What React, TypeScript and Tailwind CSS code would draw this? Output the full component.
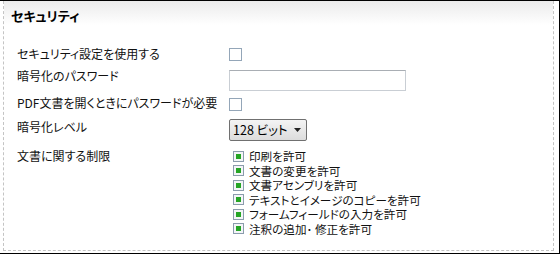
import React from "react";

const font = "font-['Noto_Sans_CJK_JP','Noto_Sans',sans-serif] [font-feature-settings:'palt']";

const permissions = [
  "印刷を許可",
  "文書の変更を許可",
  "文書アセンブリを許可",
  "テキストとイメージのコピーを許可",
  "フォームフィールドの入力を許可",
  "注釈の追加･ 修正を許可",
];

function EmptyBox() {
  return <div className="w-[13px] h-[13px] border border-[#94a6b8] bg-white" />;
}

function CheckedBox() {
  return (
    <div className="w-[11px] h-[11px] border border-[#8b9cad] bg-[#f3f5f7] flex items-center justify-center shrink-0">
      <div className="w-[5px] h-[5px] bg-[#25a525]" />
    </div>
  );
}

export default function App() {
  return (
    <div className={`w-[560px] h-[254px] bg-white border-t border-r border-b border-black text-[12px] text-[#111] ${font}`}>
      <div className="ml-[3px] w-[551px] h-[250px] border-l border-r border-b border-dashed border-[#c4c4c4]">
        {/* header */}
        <div className="h-[24px] bg-gradient-to-b from-[#ebebeb] to-white flex items-center pl-[7px] pt-[5px]">
          <span className="text-[13px] font-bold text-black">セキュリティ</span>
        </div>

        <div className="pl-[13px] pt-[21px] flex flex-col">
          <div className="h-[22px] flex">
            <div className="w-[212px] leading-[16px]">セキュリティ設定を使用する</div>
            <div className="pt-[2px]"><EmptyBox /></div>
          </div>
          <div className="h-[27px] flex">
            <div className="w-[212px] leading-[16px]">暗号化のパスワード</div>
            <div className="pt-[2px]">
              <div className="w-[177px] h-[21px] border border-[#c9ced4] border-t-[#a9aeb4] bg-white" />
            </div>
          </div>
          <div className="h-[24px] flex">
            <div className="w-[212px] leading-[16px]">PDF文書を開くときにパスワードが必要</div>
            <div className="pt-[3px]"><EmptyBox /></div>
          </div>
          <div className="h-[29px] flex">
            <div className="w-[212px] leading-[16px]">暗号化レベル</div>
            <div className="w-[78px] h-[22px] rounded-[2px] border border-[#707070] bg-gradient-to-b from-[#f4f4f4] to-[#dcdcdc] flex items-center pl-[3px] pr-[5px]">
              <span className="flex-1 text-[12.5px] leading-[16px] text-black">128 ビット</span>
              <svg width="7" height="4" viewBox="0 0 7 4"><path d="M0 0h7L3.5 4z" fill="#222" /></svg>
            </div>
          </div>
          <div className="flex">
            <div className="w-[212px] leading-[16px]">文書に関する制限</div>
            <div className="flex flex-col pl-[4px] pt-[1px]">
              {permissions.map((p) => (
                <div key={p} className="h-[14.5px] flex items-center gap-[5px]">
                  <CheckedBox />
                  <span className="block h-[14px] leading-[14px] text-[11.6px] whitespace-pre">{p}</span>
                </div>
              ))}
            </div>
          </div>
        </div>
      </div>
    </div>
  );
}
